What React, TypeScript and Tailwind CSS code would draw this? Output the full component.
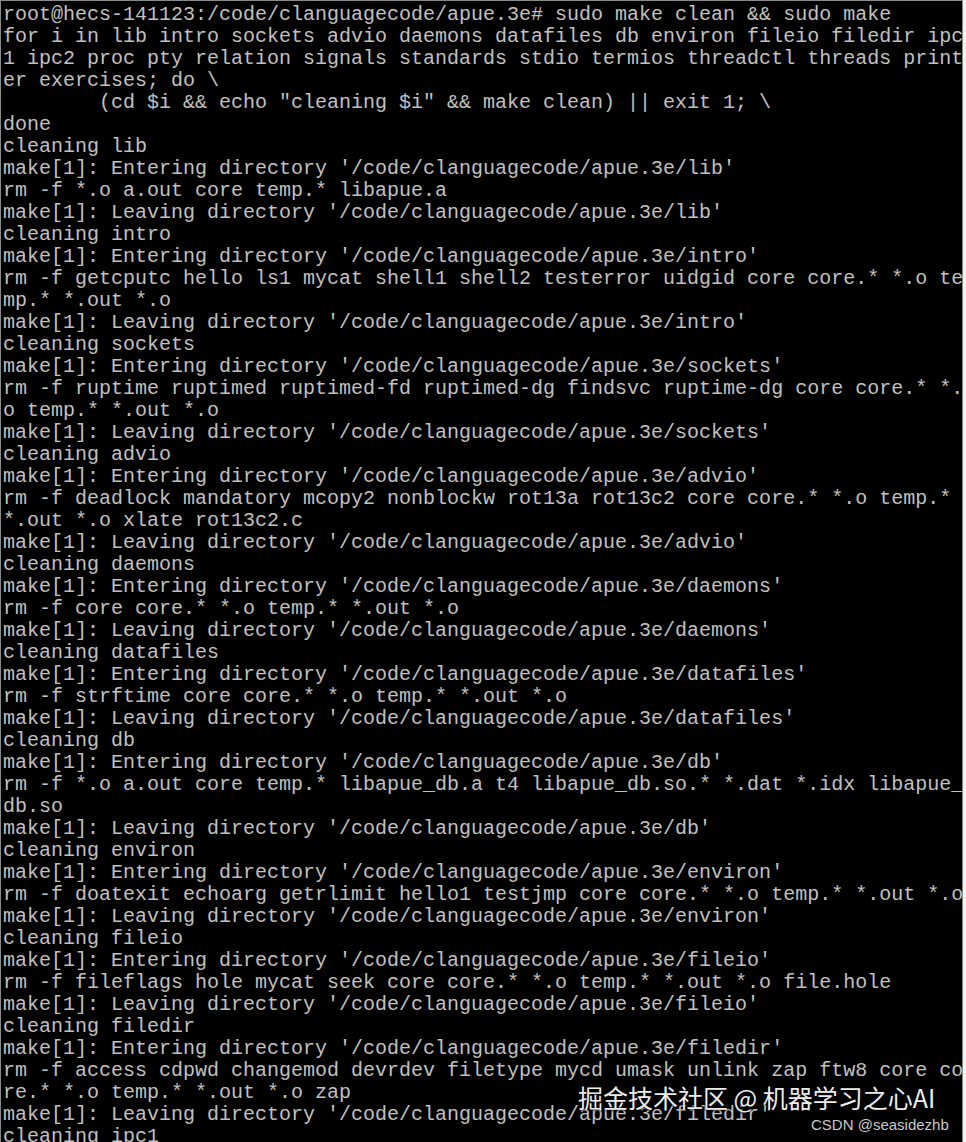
import React from "react";

const lines: string[] = [
  "root@hecs-141123:/code/clanguagecode/apue.3e# sudo make clean && sudo make",
  "for i in lib intro sockets advio daemons datafiles db environ fileio filedir ipc",
  "1 ipc2 proc pty relation signals standards stdio termios threadctl threads print",
  "er exercises; do \\",
  "        (cd $i && echo \"cleaning $i\" && make clean) || exit 1; \\",
  "done",
  "cleaning lib",
  "make[1]: Entering directory '/code/clanguagecode/apue.3e/lib'",
  "rm -f *.o a.out core temp.* libapue.a",
  "make[1]: Leaving directory '/code/clanguagecode/apue.3e/lib'",
  "cleaning intro",
  "make[1]: Entering directory '/code/clanguagecode/apue.3e/intro'",
  "rm -f getcputc hello ls1 mycat shell1 shell2 testerror uidgid core core.* *.o te",
  "mp.* *.out *.o",
  "make[1]: Leaving directory '/code/clanguagecode/apue.3e/intro'",
  "cleaning sockets",
  "make[1]: Entering directory '/code/clanguagecode/apue.3e/sockets'",
  "rm -f ruptime ruptimed ruptimed-fd ruptimed-dg findsvc ruptime-dg core core.* *.",
  "o temp.* *.out *.o",
  "make[1]: Leaving directory '/code/clanguagecode/apue.3e/sockets'",
  "cleaning advio",
  "make[1]: Entering directory '/code/clanguagecode/apue.3e/advio'",
  "rm -f deadlock mandatory mcopy2 nonblockw rot13a rot13c2 core core.* *.o temp.*",
  "*.out *.o xlate rot13c2.c",
  "make[1]: Leaving directory '/code/clanguagecode/apue.3e/advio'",
  "cleaning daemons",
  "make[1]: Entering directory '/code/clanguagecode/apue.3e/daemons'",
  "rm -f core core.* *.o temp.* *.out *.o",
  "make[1]: Leaving directory '/code/clanguagecode/apue.3e/daemons'",
  "cleaning datafiles",
  "make[1]: Entering directory '/code/clanguagecode/apue.3e/datafiles'",
  "rm -f strftime core core.* *.o temp.* *.out *.o",
  "make[1]: Leaving directory '/code/clanguagecode/apue.3e/datafiles'",
  "cleaning db",
  "make[1]: Entering directory '/code/clanguagecode/apue.3e/db'",
  "rm -f *.o a.out core temp.* libapue_db.a t4 libapue_db.so.* *.dat *.idx libapue_",
  "db.so",
  "make[1]: Leaving directory '/code/clanguagecode/apue.3e/db'",
  "cleaning environ",
  "make[1]: Entering directory '/code/clanguagecode/apue.3e/environ'",
  "rm -f doatexit echoarg getrlimit hello1 testjmp core core.* *.o temp.* *.out *.o",
  "make[1]: Leaving directory '/code/clanguagecode/apue.3e/environ'",
  "cleaning fileio",
  "make[1]: Entering directory '/code/clanguagecode/apue.3e/fileio'",
  "rm -f fileflags hole mycat seek core core.* *.o temp.* *.out *.o file.hole",
  "make[1]: Leaving directory '/code/clanguagecode/apue.3e/fileio'",
  "cleaning filedir",
  "make[1]: Entering directory '/code/clanguagecode/apue.3e/filedir'",
  "rm -f access cdpwd changemod devrdev filetype mycd umask unlink zap ftw8 core co",
  "re.* *.o temp.* *.out *.o zap",
  "make[1]: Leaving directory '/code/clanguagecode/apue.3e/filedir'",
  "cleaning ipc1",
];

export default function App() {
  return (
    <div className="w-[966px] h-[1142px] overflow-hidden bg-[#f2f2f2]">
      <div className="relative w-[963px] h-[1142px] bg-black border-t border-l border-r border-[#8a8a8a] overflow-hidden">
        <div
          className="pl-[2px] pt-[3px] text-[20px] leading-[22px] text-[#c0c0c0] whitespace-pre"
          style={{ fontFamily: '"Liberation Mono", "Courier New", monospace' }}
        >
          {lines.map((l, i) => (
            <div key={i} className="h-[22px]">
              {l}
            </div>
          ))}
        </div>
        <div
          className="absolute left-[577px] top-[1080px] text-[25px] leading-[32px] text-[#ececec] whitespace-nowrap [text-shadow:0_0_3px_#000,0_0_2px_#000]"
          style={{ fontFamily: '"Noto Sans CJK SC", "Noto Sans", sans-serif' }}
        >
          掘金技术社区 @ 机器学习之心AI
        </div>
        <div
          className="absolute left-[810px] top-[1114px] text-[15px] leading-[20px] text-[#c8c8c8] whitespace-nowrap"
          style={{ fontFamily: '"Liberation Sans", Arial, sans-serif' }}
        >
          CSDN @seasidezhb
        </div>
      </div>
    </div>
  );
}
